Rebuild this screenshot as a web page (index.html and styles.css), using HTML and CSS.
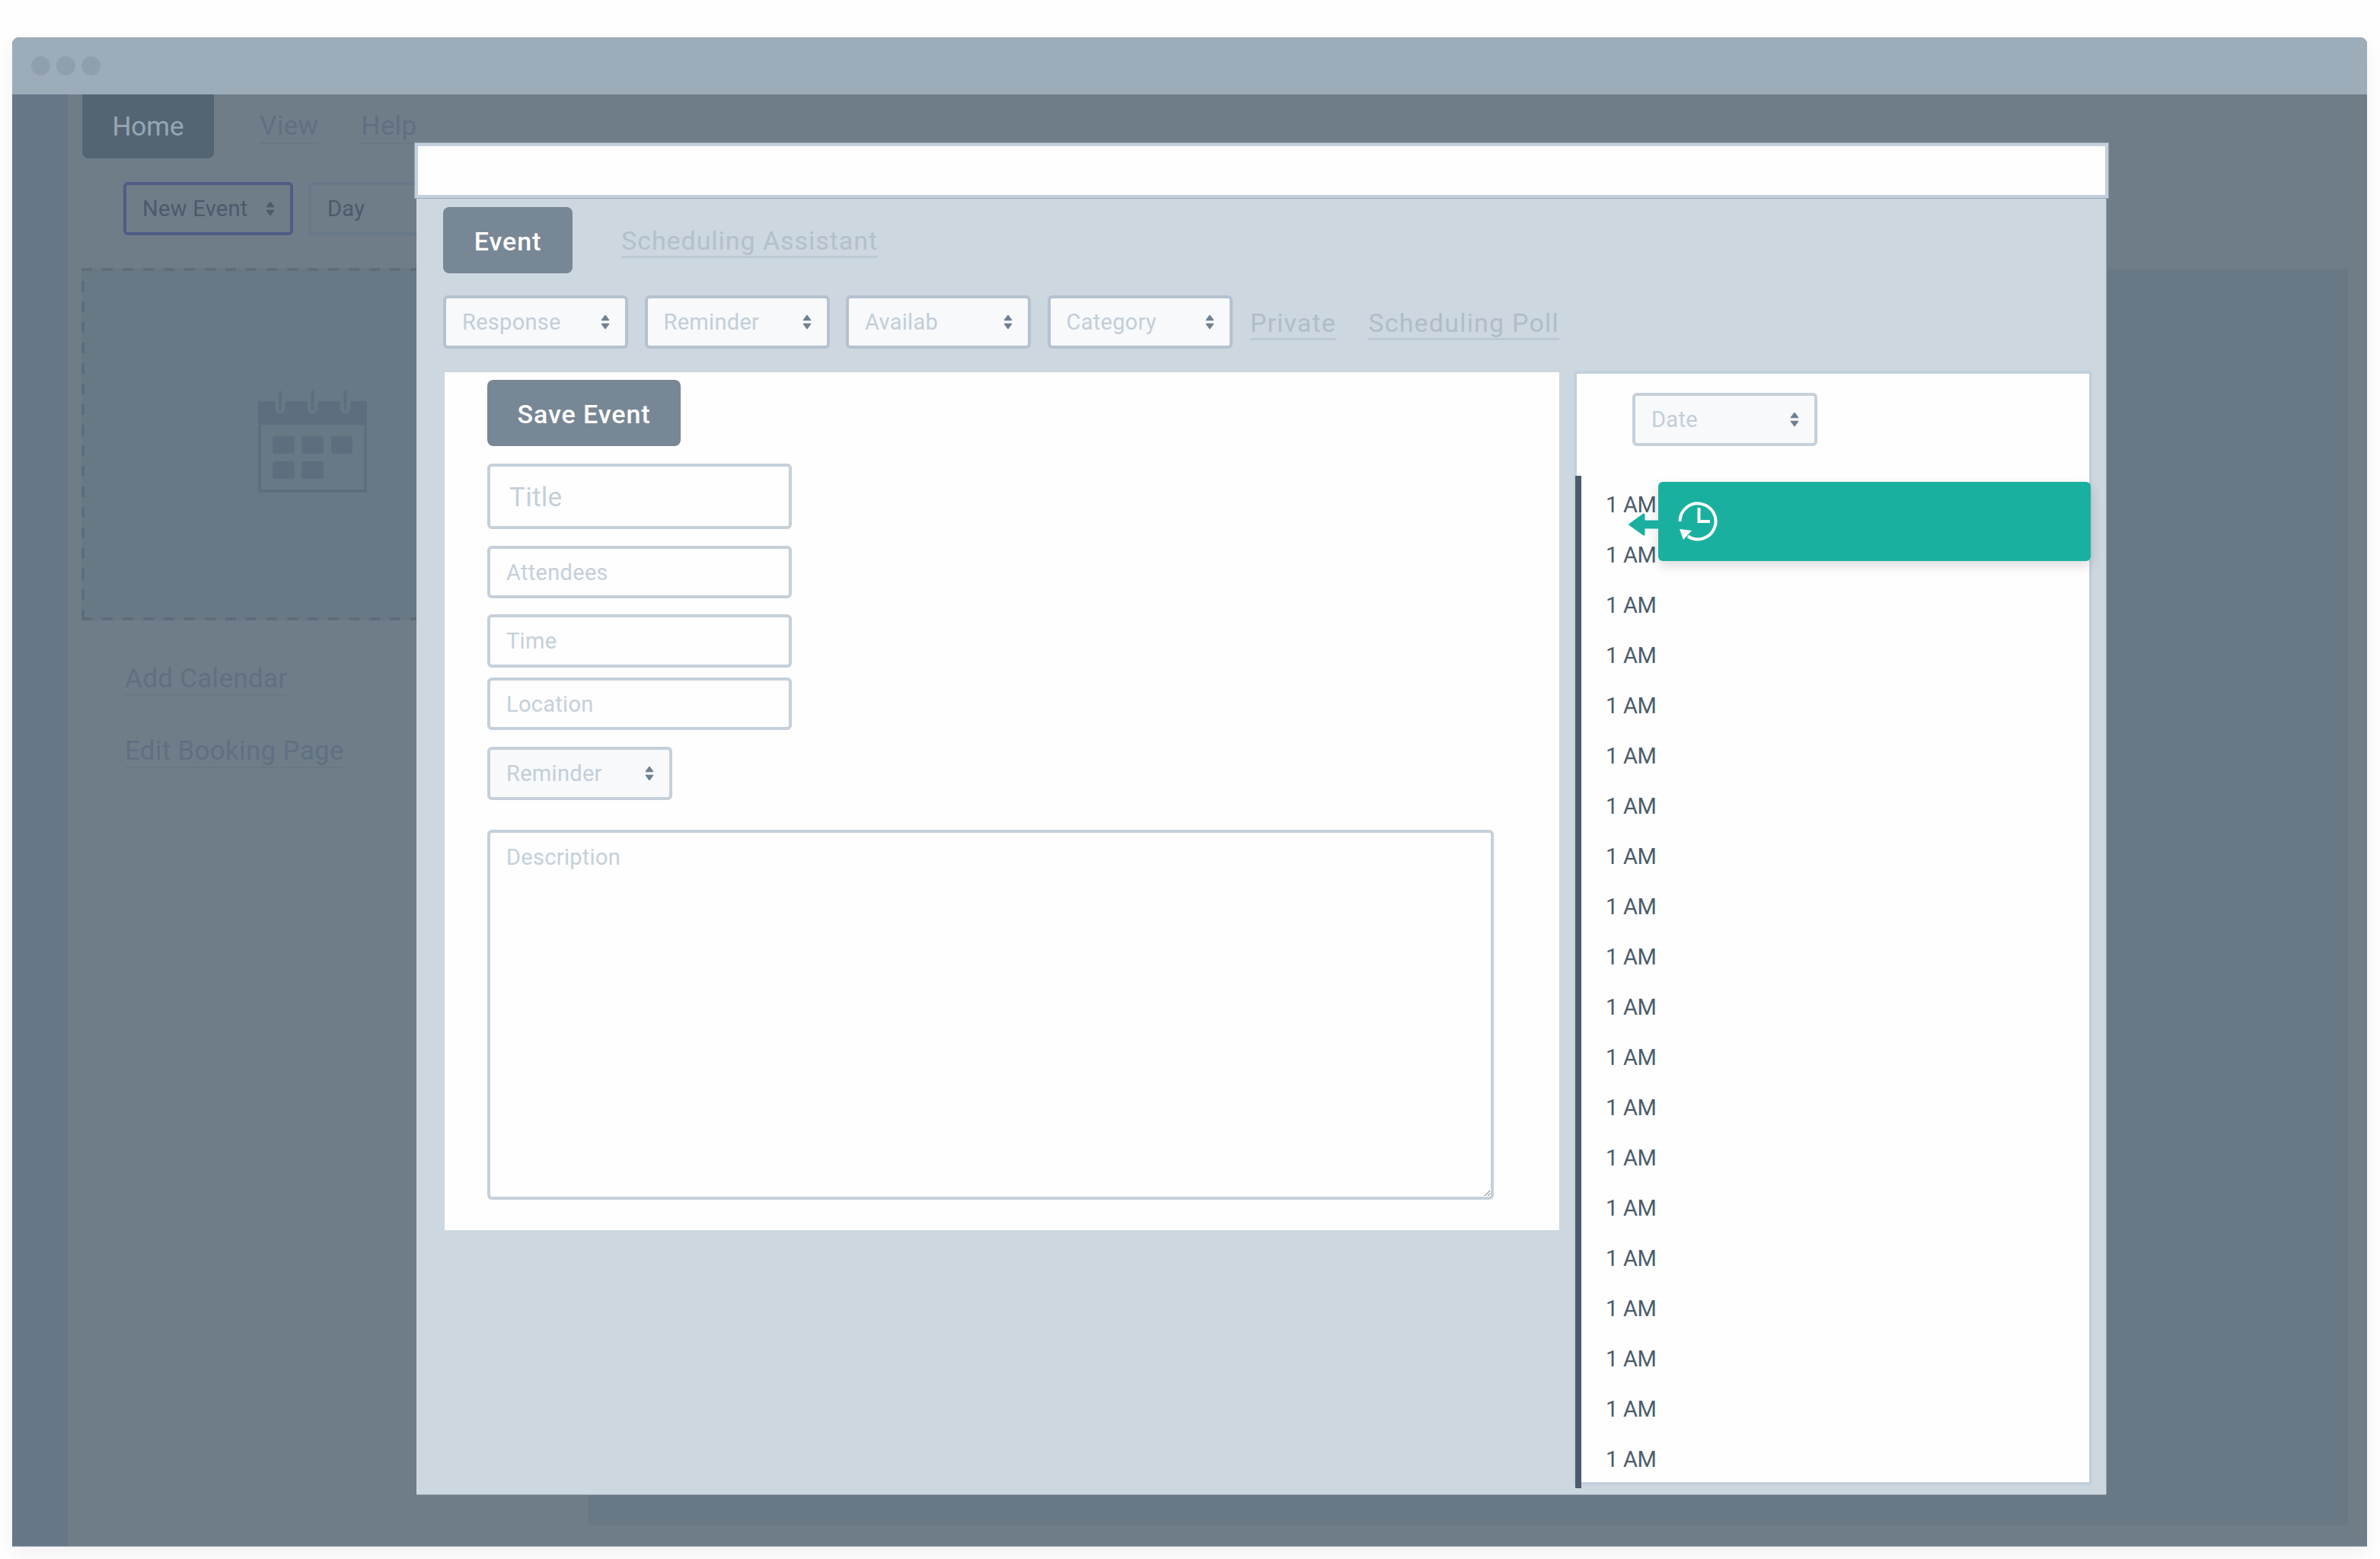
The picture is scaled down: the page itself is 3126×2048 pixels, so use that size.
FILE: index.html
```html
<!DOCTYPE html>
<html lang="en">
<head>
<meta charset="utf-8">
<title>New Event</title>
<link rel="stylesheet" href="styles.css">
</head>
<body>
<svg class="defs" width="0" height="0" aria-hidden="true">
  <symbol id="updown" viewBox="0 0 12 20">
    <path d="M6 1.500 10.500 7.500H1.500Z M1.500 12.500H10.500L6 18.500Z" fill="currentColor" stroke="currentColor" stroke-width="1.500" stroke-linejoin="round"/>
  </symbol>
</svg>
<div class="window">
  <header class="titlebar">
    <span class="dot"></span><span class="dot"></span><span class="dot"></span>
  </header>
  <div class="app">
    <aside class="sidebar"></aside>
    <main class="main">
      <nav class="bg-tabs">
        <span class="bg-home">Home</span>
        <a class="bg-link bg-view">View</a>
        <a class="bg-link bg-help">Help</a>
      </nav>
      <div class="bg-toolbar">
        <div class="select bg-select bg-select-active"><span>New Event</span><svg class="updown"><use href="#updown"/></svg></div>
        <div class="select bg-select"><span>Day</span><svg class="updown"><use href="#updown"/></svg></div>
      </div>
      <div class="bg-content">
        <section class="bg-left">
          <div class="dropzone">
            <svg class="calendar" width="143" height="134" viewBox="0 0 143 134">
              <rect x="2" y="16" width="139" height="116" fill="none" stroke="#5d6f7e" stroke-width="4"/>
              <rect x="0" y="14" width="143" height="31" fill="#5d6f7e"/>
              <g stroke-linecap="round" fill="none">
                <path d="M29 4V24M71.500 4V24M114.500 4V24" stroke="#687885" stroke-width="13"/>
                <path d="M29 2V24M71.500 2V24M114.500 2V24" stroke="#5d6f7e" stroke-width="4"/>
              </g>
              <g fill="#5d6f7e">
                <rect x="19" y="60" width="29" height="23" rx="3"/>
                <rect x="57" y="60" width="29" height="23" rx="3"/>
                <rect x="96" y="60" width="28" height="23" rx="3"/>
                <rect x="19" y="93" width="29" height="23" rx="3"/>
                <rect x="57" y="93" width="29" height="23" rx="3"/>
              </g>
            </svg>
          </div>
          <a class="bg-side-link">Add Calendar</a>
          <a class="bg-side-link">Edit Booking Page</a>
        </section>
        <section class="bg-panel"></section>
      </div>
    </main>
  </div>

  <div class="modal">
    <div class="modal-header"></div>
    <div class="modal-tabs">
      <button class="btn">Event</button>
      <a class="link link-large">Scheduling Assistant</a>
    </div>
    <div class="modal-toolbar">
      <div class="select"><span>Response</span><svg class="updown"><use href="#updown"/></svg></div>
      <div class="select"><span>Reminder</span><svg class="updown"><use href="#updown"/></svg></div>
      <div class="select"><span>Availab</span><svg class="updown"><use href="#updown"/></svg></div>
      <div class="select"><span>Category</span><svg class="updown"><use href="#updown"/></svg></div>
      <a class="link link-private">Private</a>
      <a class="link link-poll">Scheduling Poll</a>
    </div>
    <div class="modal-body">
      <form class="event-form">
        <button class="btn btn-save" type="button">Save Event</button>
        <input class="field field-title" placeholder="Title">
        <input class="field field-attendees" placeholder="Attendees">
        <input class="field field-time" placeholder="Time">
        <input class="field field-location" placeholder="Location">
        <div class="select select-light select-form"><span>Reminder</span><svg class="updown"><use href="#updown"/></svg></div>
        <textarea class="field field-description" placeholder="Description"></textarea>
      </form>
      <aside class="schedule">
        <div class="select select-light select-date"><span>Date</span><svg class="updown"><use href="#updown"/></svg></div>
        <div class="hours">
          <div class="hour">1 AM</div><div class="hour">1 AM</div><div class="hour">1 AM</div><div class="hour">1 AM</div>
          <div class="hour">1 AM</div><div class="hour">1 AM</div><div class="hour">1 AM</div><div class="hour">1 AM</div>
          <div class="hour">1 AM</div><div class="hour">1 AM</div><div class="hour">1 AM</div><div class="hour">1 AM</div>
          <div class="hour">1 AM</div><div class="hour">1 AM</div><div class="hour">1 AM</div><div class="hour">1 AM</div>
          <div class="hour">1 AM</div><div class="hour">1 AM</div><div class="hour">1 AM</div><div class="hour">1 AM</div>
        </div>
        <div class="callout">
          <svg class="callout-arrow" width="40" height="32" viewBox="0 0 40 32">
            <path d="M40 12H21V3L3 16 21 29V20H40Z" fill="#1ab09f" stroke="#1ab09f" stroke-width="3" stroke-linejoin="round"/>
          </svg>
          <svg class="history" width="52" height="52" viewBox="0 0 52 52" fill="none">
            <path d="M2.500 26A23.500 23.500 0 1 1 13 45.500" stroke="#fff" stroke-width="4"/>
            <path d="M2 36 18 38 7 50Z" fill="#fff"/>
            <path d="M27.500 8V26H42" stroke="#fff" stroke-width="4"/>
          </svg>
        </div>
      </aside>
    </div>
  </div>
</div>
</body>
</html>
```
FILE: styles.css
```css
* { box-sizing: border-box; }
html, body { margin: 0; height: 100%; }
body {
  width: 3126px;
  height: 2048px;
  padding: 49px 17px 0 16px;
  background: #fefefe;
  overflow: hidden;
  font-family: "Roboto", "Liberation Sans", sans-serif;
}
.defs { position: absolute; }
a { display: block; }

.window {
  position: relative;
  height: 1982px;
  border-radius: 9px 9px 0 0;
  background: #6f7d89;
  box-shadow: 0 1px 0 #a3b0bb, 0 8px 24px rgba(0, 0, 0, .06);
  display: flex;
  flex-direction: column;
}
.titlebar {
  height: 75px;
  flex: none;
  display: flex;
  align-items: center;
  gap: 8px;
  padding-left: 25px;
  background: #9dacb9;
  border-radius: 9px 9px 0 0;
}
.dot { width: 25px; height: 25px; border-radius: 50%; background: #8f9fae; }

.app { flex: 1; display: flex; min-height: 0; }
.sidebar { width: 73px; flex: none; background: #667788; }
.main { flex: 1; min-width: 0; padding-left: 19px; display: flex; flex-direction: column; }

.bg-tabs { display: flex; align-items: center; height: 84px; }
.bg-home {
  width: 173px;
  height: 84px;
  display: flex;
  align-items: center;
  justify-content: center;
  border-radius: 0 0 8px 8px;
  background: #536573;
  color: #98a6b2;
  font-size: 35px;
}
.bg-link {
  color: #5f7082;
  font-size: 35px;
  line-height: 42px;
  letter-spacing: .4px;
  margin-top: 2px;
  border-bottom: 2px solid #6a7885;
}
.bg-view { margin-left: 60px; }
.bg-help { margin-left: 56px; }

.select {
  width: 243px;
  height: 70px;
  flex: none;
  display: flex;
  align-items: center;
  justify-content: space-between;
  padding: 0 20px 0 21px;
  border: 4px solid #b5c2ce;
  border-radius: 6px;
  background: #f7f9fb;
  color: #c3ced8;
  font-size: 29px;
  letter-spacing: .3px;
}
.updown { width: 12px; height: 20px; flex: none; color: #718191; }
.select-light { border-color: #c5d0da; }

.bg-toolbar { display: flex; gap: 20px; margin: 31px 0 0 54px; }
.bg-select { background: transparent; border-color: #66788a; color: #4a5b6b; }
.bg-select .updown { color: #4a5b6b; }
.bg-select-active { width: 223px; border-color: #4e5c86; }

.bg-content { display: flex; margin-top: 43px; flex: 1; min-height: 0; }
.bg-left { width: 664px; flex: none; }
.dropzone {
  width: 609px;
  height: 463px;
  margin-left: -1px;
  padding: 161px 3px 0 0;
  display: flex;
  justify-content: center;
  align-items: flex-start;
  background-color: #687885;
  background-image:
    repeating-linear-gradient(90deg, #5c6d7c 0 14px, transparent 14px 27px),
    repeating-linear-gradient(90deg, #5c6d7c 0 14px, transparent 14px 27px),
    repeating-linear-gradient(0deg, #5c6d7c 0 14px, transparent 14px 27px),
    repeating-linear-gradient(0deg, #5c6d7c 0 14px, transparent 14px 27px);
  background-size: 100% 4px, 100% 4px, 4px 100%, 4px 100%;
  background-position: 0 0, 0 100%, 0 0, 100% 0;
  background-repeat: no-repeat;
}
.bg-side-link {
  width: fit-content;
  margin: 57px 0 0 56px;
  color: #5f7082;
  font-size: 35px;
  line-height: 40px;
  letter-spacing: .3px;
  border-bottom: 2px solid #6a7885;
}
.bg-side-link + .bg-side-link { margin-top: 53px; }
.bg-panel { flex: 1; height: 1650px; margin: 1px 25px 0 0; background: #687885; }

.modal {
  position: absolute;
  left: 531px;
  top: 139px;
  width: 2219px;
  height: 1775px;
  padding: 0 0 0 35px;
  background: #cdd7e0;
  box-shadow: 0 1px 0 #9aa8b5, 1px 0 0 #9aa8b5;
}
.modal-header {
  width: 2224px;
  height: 72px;
  margin-left: -37px;
  background: #fefefe;
  border: 4px solid #c3d0dc;
  box-shadow: 0 0 0 1px #98a6b3;
  position: relative;
}
.modal-tabs { display: flex; align-items: center; gap: 64px; margin-top: 12px; }
.btn {
  width: 170px;
  height: 87px;
  padding: 2px 0 0;
  border: 0;
  border-radius: 8px;
  background: #788795;
  color: #fff;
  font: 500 34px "Roboto", "Liberation Sans", sans-serif;
  letter-spacing: .9px;
}
.link {
  color: #b0bdc8;
  font-size: 34px;
  line-height: 40px;
  letter-spacing: 1.100px;
  margin-top: 4px;
  border-bottom: 3px solid #bdc9d4;
}
.link-large { color: #b3c0cb; letter-spacing: .95px; }
.modal-toolbar { display: flex; align-items: center; gap: 21.500px; margin-top: 29px; }
.link-private { margin-left: 2px; }
.link-poll { margin-left: 21px; letter-spacing: 1.200px; }

.modal-body { display: flex; align-items: flex-start; gap: 19px; margin: 31px 0 0 2px; }
.event-form {
  width: 1464px;
  height: 1127px;
  padding: 10px 0 0 56px;
  display: flex;
  flex-direction: column;
  align-items: flex-start;
  background: #fefefe;
}
.btn-save { width: 254px; }
.field {
  display: block;
  width: 400px;
  height: 70px;
  padding: 0 21px;
  border: 4px solid #c5d0da;
  border-radius: 6px;
  background: #fefefe;
  color: #c5d0da;
  outline: 0;
  font: 29px "Roboto", "Liberation Sans", sans-serif;
  letter-spacing: .3px;
}
.field::placeholder { color: #c5d0da; opacity: 1; }
.field-title { height: 86px; margin-top: 23px; font-size: 35px; padding: 2px 25px 0; }
.field-attendees { height: 69px; margin-top: 22px; }
.field-time { margin-top: 21px; }
.field-location { height: 69px; margin-top: 13px; }
.select-form { margin-top: 22px; }
.field-description {
  width: 1322px;
  height: 486px;
  margin-top: 39px;
  padding: 14px 21px;
  line-height: 36px;
}

.schedule {
  position: relative;
  width: 681px;
  height: 1464px;
  margin-top: -2px;
  padding: 25px 0 0 73px;
  background: #fefefe;
  border: 4px solid #c3d0dc;
}
.hours {
  width: 600px;
  height: 1330px;
  margin: 39px 0 0 -75px;
  padding: 5px 0 0 32px;
  border-left: 8px solid #4a5c6b;
}
.hour {
  height: 66px;
  line-height: 66px;
  color: #4a5c6b;
  font-size: 29px;
  letter-spacing: -.3px;
}
.callout {
  position: absolute;
  left: 107px;
  top: 142px;
  width: 568px;
  height: 104px;
  display: flex;
  align-items: center;
  padding-left: 26px;
  border-radius: 6px;
  background: #1ab09f;
  box-shadow: 0 6px 16px rgba(0, 0, 0, .14);
}
.callout-arrow { position: absolute; left: -40px; top: 40px; }
```
